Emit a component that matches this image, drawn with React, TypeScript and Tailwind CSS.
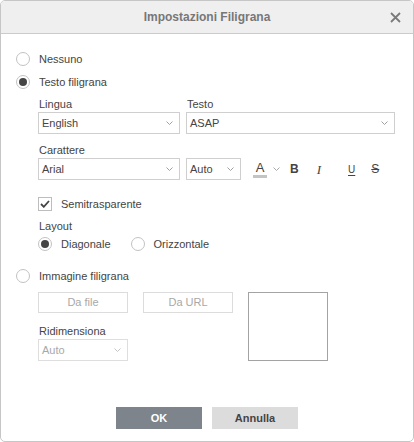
import type { ReactNode } from 'react'

function Chevron({ color = '#9a9a9a' }: { color?: string }) {
  return (
    <svg width="7" height="4" viewBox="0 0 7 4" className="shrink-0">
      <polyline points="0.5,0.5 3.5,3.5 6.5,0.5" fill="none" stroke={color} strokeWidth="1" />
    </svg>
  )
}

function Select({ value, width, disabled }: { value: string; width: string; disabled?: boolean }) {
  return (
    <div
      className={`${width} h-[22px] flex items-center justify-between pl-[3px] pr-[6px] border ${
        disabled ? 'border-[#dedede] text-[#a8a8a8]' : 'border-[#cfcfcf] text-[#444]'
      } bg-white`}
    >
      <span>{value}</span>
      <Chevron color={disabled ? '#c4c4c4' : '#a0a0a0'} />
    </div>
  )
}

function Radio({ checked, children }: { checked?: boolean; children: ReactNode }) {
  return (
    <div className="h-[14px] flex items-center gap-[9px]">
      <span className="w-[14px] h-[14px] rounded-full border border-[#c2c2c2] bg-white flex items-center justify-center">
        {checked && <span className="w-[8px] h-[8px] rounded-full bg-[#444]" />}
      </span>
      <span className="text-[#444]">{children}</span>
    </div>
  )
}

export default function App() {
  return (
    <div
      className="w-[414px] h-[442px] bg-white border border-[#c6c6c6] rounded-[5px] overflow-hidden flex flex-col text-[11px] leading-[13px]"
      style={{ fontFamily: '"Liberation Sans", Arial, sans-serif' }}
    >
      {/* header */}
      <div className="h-[33px] shrink-0 bg-[#efefef] border-b border-[#cbcbcb] relative flex items-center justify-center">
        <span className="text-[12px] font-bold text-[#777]">Impostazioni Filigrana</span>
        <svg width="11" height="11" viewBox="0 0 11 11" className="absolute right-[12px] top-[11px]">
          <path d="M1 1 L10 10 M10 1 L1 10" stroke="#7a7a7a" strokeWidth="1.8" />
        </svg>
      </div>

      <div className="pl-[15px] flex flex-col">
        <div className="mt-[18px]">
          <Radio>Nessuno</Radio>
        </div>
        <div className="mt-[9px]">
          <Radio checked>Testo filigrana</Radio>
        </div>

        <div className="pl-[22px] flex flex-col">
          <div className="mt-[9px] flex gap-[6px]">
            <div className="flex flex-col">
              <span className="h-[13px] pl-[1px] text-[#444]">Lingua</span>
              <div className="mt-[1px]">
                <Select value="English" width="w-[142px]" />
              </div>
            </div>
            <div className="flex flex-col">
              <span className="h-[13px] pl-[1px] text-[#444]">Testo</span>
              <div className="mt-[1px]">
                <Select value="ASAP" width="w-[209px]" />
              </div>
            </div>
          </div>

          <span className="mt-[10px] h-[13px] pl-[1px] text-[#444]">Carattere</span>
          <div className="mt-[1px] flex items-center gap-[6px]">
            <Select value="Arial" width="w-[142px]" />
            <Select value="Auto" width="w-[55px]" />
            <div className="ml-[6px] flex items-center h-[22px] text-[#444]">
              <div className="flex items-center gap-[6px]">
                <div className="flex flex-col items-center">
                  <span className="text-[13px] leading-[13px] font-light">A</span>
                  <span className="mt-[1px] w-[14px] h-[3px] bg-[#c4c4c4]" />
                </div>
                <Chevron color="#a8a8a8" />
              </div>
              <span className="ml-[10px] text-[12px] font-bold">B</span>
              <span
                className="ml-[18px] text-[13px] italic"
                style={{ fontFamily: '"Liberation Serif", serif' }}
              >
                I
              </span>
              <span className="ml-[27px] text-[10px] underline underline-offset-[2px]">U</span>
              <span className="ml-[16px] text-[12px] line-through">S</span>
            </div>
          </div>

          <div className="mt-[17px] h-[14px] flex items-center gap-[9px]">
            <span className="w-[14px] h-[14px] border border-[#bdbdbd] bg-white flex items-center justify-center">
              <svg width="10" height="8" viewBox="0 0 10 8">
                <polyline points="1,4 3.8,6.8 9,1" fill="none" stroke="#444" strokeWidth="1.8" />
              </svg>
            </span>
            <span className="text-[#444]">Semitrasparente</span>
          </div>

          <span className="mt-[9px] h-[13px] pl-[1px] text-[#444]">Layout</span>
          <div className="mt-[4px] flex items-center gap-[20px]">
            <Radio checked>Diagonale</Radio>
            <Radio>Orizzontale</Radio>
          </div>
        </div>

        <div className="mt-[18px]">
          <Radio>Immagine filigrana</Radio>
        </div>

        <div className="pl-[22px] mt-[9px] flex gap-[15px]">
          <div className="flex flex-col">
            <div className="flex gap-[15px]">
              <div className="w-[90px] h-[21px] border border-[#dcdcdc] text-[#a8a8a8] flex items-center justify-center">
                Da file
              </div>
              <div className="w-[90px] h-[21px] border border-[#dcdcdc] text-[#a8a8a8] flex items-center justify-center">
                Da URL
              </div>
            </div>
            <span className="mt-[12px] h-[13px] pl-[1px] text-[#444]">Ridimensiona</span>
            <div className="mt-[1px]">
              <Select value="Auto" width="w-[90px]" disabled />
            </div>
          </div>
          <div className="w-[80px] h-[69px] border border-[#a3a3a3]" />
        </div>
      </div>

      <div className="mt-auto pb-[12px] flex justify-center gap-[10px]">
        <button className="w-[86px] h-[22px] bg-[#7d848b] text-white font-bold">OK</button>
        <button className="w-[86px] h-[22px] bg-[#dcdcdc] text-[#444] font-bold">Annulla</button>
      </div>
    </div>
  )
}
